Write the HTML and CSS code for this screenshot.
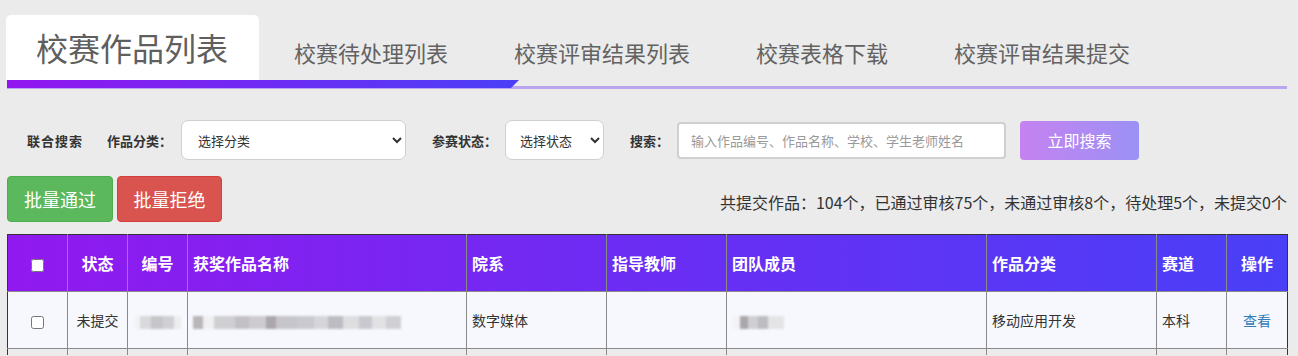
FILE: index.html
```html
<!DOCTYPE html>
<html lang="zh-CN">
<head>
<meta charset="utf-8">
<title>校赛作品列表</title>
<link rel="stylesheet" href="styles.css">
</head>
<body>
<div class="page">
  <nav class="tabs">
    <div class="tab tab-active">校赛作品列表</div>
    <div class="tab">校赛待处理列表</div>
    <div class="tab">校赛评审结果列表</div>
    <div class="tab">校赛表格下载</div>
    <div class="tab">校赛评审结果提交</div>
  </nav>
  <div class="rule"><div class="rule-bar"></div></div>

  <div class="filters">
    <span class="lbl lbl-main">联合搜索</span>
    <span class="lbl lbl-cat">作品分类：</span>
    <select class="sel sel-cat"><option>选择分类</option></select>
    <span class="lbl lbl-state">参赛状态：</span>
    <select class="sel sel-state"><option>选择状态</option></select>
    <span class="lbl lbl-search">搜索：</span>
    <input class="search" type="text" placeholder="输入作品编号、作品名称、学校、学生老师姓名">
    <button class="btn-search">立即搜索</button>
  </div>

  <div class="actions">
    <button class="btn btn-pass">批量通过</button>
    <button class="btn btn-reject">批量拒绝</button>
    <div class="stats">共提交作品：104个，已通过审核75个，未通过审核8个，待处理5个，未提交0个</div>
  </div>

  <table class="grid">
    <colgroup>
      <col class="c-chk"><col class="c-state"><col class="c-no"><col class="c-name"><col class="c-dept"><col class="c-teacher"><col class="c-team"><col class="c-cat"><col class="c-track"><col class="c-op">
    </colgroup>
    <thead>
      <tr>
        <th class="center"><input type="checkbox" class="chk"></th>
        <th class="center">状态</th>
        <th class="center">编号</th>
        <th>获奖作品名称</th>
        <th>院系</th>
        <th>指导教师</th>
        <th>团队成员</th>
        <th>作品分类</th>
        <th>赛道</th>
        <th class="center">操作</th>
      </tr>
    </thead>
    <tbody>
      <tr class="row">
        <td class="center"><input type="checkbox" class="chk"></td>
        <td class="center">未提交</td>
        <td class="center"><span class="mosaic mosaic-no"></span></td>
        <td><span class="mosaic mosaic-name"></span></td>
        <td>数字媒体</td>
        <td></td>
        <td><span class="mosaic mosaic-team"></span></td>
        <td>移动应用开发</td>
        <td>本科</td>
        <td class="center"><a class="link">查看</a></td>
      </tr>
      <tr class="row row-next">
        <td></td><td></td><td></td><td></td><td></td><td></td><td></td><td></td><td></td><td></td>
      </tr>
    </tbody>
  </table>
</div>
</body>
</html>
```

FILE: styles.css
```css
html, body {
  margin: 0;
  padding: 0;
  background: #ebebeb;
  font-family: "Noto Sans CJK SC", "Microsoft YaHei", "Noto Sans", sans-serif;
  color: #333;
  overflow: hidden;
}

.page {
  padding: 15px 11px 0 7px;
}

/* tabs */
.tabs {
  display: flex;
  align-items: flex-start;
  height: 65px;
}
.tab {
  box-sizing: border-box;
  height: 65px;
  padding: 22px 33px 0 33px;
  font-size: 22px;
  line-height: 30px;
  color: #626262;
  white-space: nowrap;
}
.tab-active {
  background: #fff;
  border-radius: 5px 5px 0 0;
  padding: 12px 31px 0 30px;
  font-size: 32px;
  line-height: 40px;
  color: #5f5f5f;
  margin-left: -1px;
  margin-right: 2px;
}

.rule {
  height: 9px;
  background: linear-gradient(#b9a6ee, #b9a6ee) left bottom / 100% 3px no-repeat;
}
.rule-bar {
  width: 512px;
  height: 8px;
  background: linear-gradient(to right, #9216ef, #4b3ff7);
  clip-path: polygon(0 0, 100% 0, calc(100% - 8px) 100%, 0 100%);
}

/* filters */
.filters {
  display: flex;
  align-items: center;
  margin-top: 31px;
  height: 40px;
}
.lbl {
  font-size: 13px;
  font-weight: bold;
  color: #333;
  white-space: nowrap;
}
.lbl-main { margin-left: 20px; width: 56px; letter-spacing: 1px; }
.lbl-cat { margin-left: 24px; width: 74px; }
.lbl-state { margin-left: 26px; width: 73px; }
.lbl-search { margin-left: 26px; width: 47px; }

.sel {
  box-sizing: border-box;
  height: 40px;
  border: 1px solid #cfcfcf;
  border-radius: 7px;
  background: #fff;
  font-family: inherit;
  font-size: 13px;
  color: #333;
  padding: 0 6px 0 12px;
}
.sel-cat { width: 225px; }
.sel-state { width: 99px; padding-left: 10px; }

.search {
  box-sizing: border-box;
  width: 329px;
  height: 37px;
  border: 2px solid #cfcfcf;
  border-radius: 4px;
  background: #fff;
  font-family: inherit;
  font-size: 13px;
  padding: 0 12px;
  outline: none;
}
.search::placeholder { color: #999; }

.btn-search {
  box-sizing: border-box;
  margin-left: 14px;
  width: 119px;
  height: 39px;
  border: 0;
  border-radius: 4px;
  background: linear-gradient(to right, #c582f0, #9b91f5);
  color: #fff;
  font-family: inherit;
  font-size: 16px;
}

/* actions */
.actions {
  display: flex;
  align-items: center;
  margin-top: 16px;
  height: 46px;
}
.btn {
  box-sizing: border-box;
  height: 46px;
  border: 1px solid transparent;
  border-radius: 4px;
  color: #fff;
  font-family: inherit;
  font-size: 18px;
  padding: 0;
}
.btn-pass { width: 106px; background: #5cb85c; border-color: #4cae4c; }
.btn-reject { width: 105px; margin-left: 4px; background: #d9534f; border-color: #d43f3a; }
.stats {
  margin-left: auto;
  padding-top: 5px;
  font-size: 16px;
  color: #333;
  white-space: nowrap;
}

/* table */
.grid {
  margin-top: 12px;
  width: 1280px;
  border-collapse: collapse;
  table-layout: fixed;
  border: 1px solid #333;
  border-bottom: 0;
}
.c-chk { width: 60px; }
.c-state { width: 60px; }
.c-no { width: 60px; }
.c-name { width: 279px; }
.c-dept { width: 140px; }
.c-teacher { width: 120px; }
.c-team { width: 260px; }
.c-cat { width: 170px; }
.c-track { width: 70px; }
.c-op { width: 61px; }

.grid thead tr {
  background: linear-gradient(to right, #9119ef, #6b2df3 50%, #4a3ff7);
}
.grid th {
  height: 56px;
  padding: 0 5px;
  border: 1px solid #8a8a8a;
  border-top-color: #333;
  color: #fff;
  font-size: 16px;
  font-weight: bold;
  text-align: left;
}
.grid td {
  height: 56px;
  padding: 0 5px;
  border: 1px solid #8a8a8a;
  font-size: 14px;
  color: #333;
  text-align: left;
}
.grid tr > :first-child { border-left-color: #333; }
.grid tr > :last-child { border-right-color: #333; }
.grid .center { text-align: center; }
.row { background: #f7f8fd; }
.row-next { background: #ececec; }
.row-next td { height: 6px; padding: 0; border-bottom: 0; }

.chk {
  margin: 0;
  width: 13px;
  height: 13px;
  vertical-align: middle;
}
.link {
  color: #337ab7;
  text-decoration: none;
}

.mosaic {
  display: inline-block;
  height: 13px;
  vertical-align: middle;
  filter: blur(1px);
}
.mosaic-no {
  width: 46px;
  background: linear-gradient(to right,
    #f2f2f4 0 10%, #d9d9dc 10% 35%, #c5c5ca 35% 60%, #d0d0d4 60% 85%, #ededee 85% 100%);
}
.mosaic-name {
  width: 208px;
  background: linear-gradient(to right,
    #b9b6ba 0 5%, #f0f0f2 5% 10%, #cfcfd3 10% 20%, #c3c0c5 20% 27%, #cdcbd0 27% 35%,
    #aba6aa 35% 40%, #c6c5ca 40% 50%, #c9c9cf 50% 58%, #d6d6da 58% 65%, #bdbcc3 65% 72%,
    #dedee1 72% 80%, #c8c8ce 80% 86%, #e2e2e5 86% 93%, #d0d0d4 93% 100%);
}
.mosaic-team {
  width: 52px;
  background: linear-gradient(to right,
    #f3f3f5 0 15%, #a9a7ab 15% 30%, #cfcfd3 30% 50%, #bcbcc1 50% 70%, #e4e4e7 70% 100%);
}
```
